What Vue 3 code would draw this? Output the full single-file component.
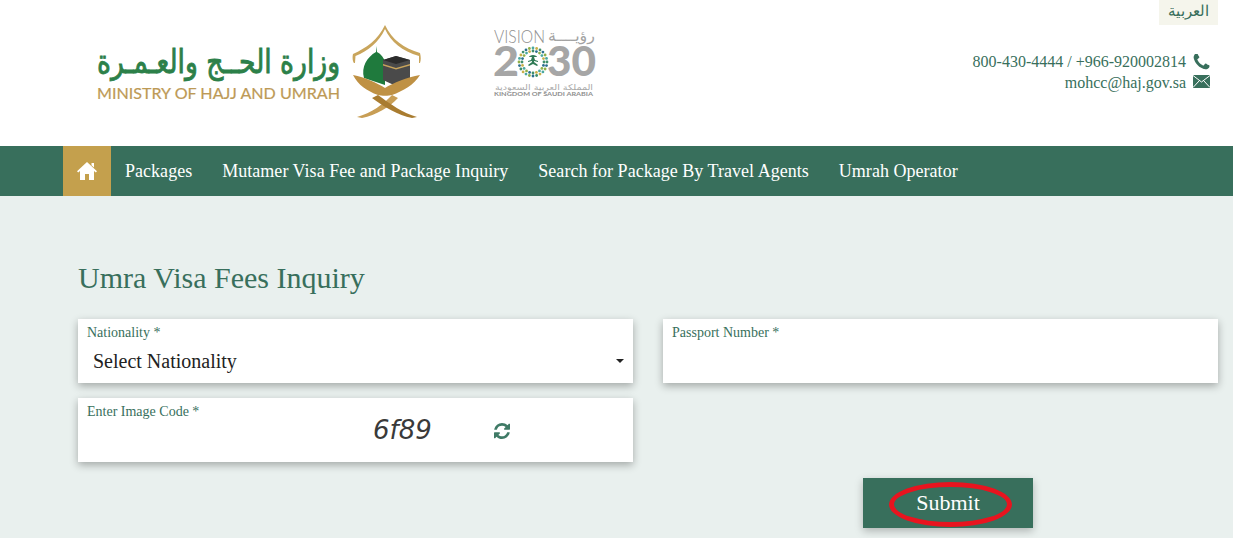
<template>
  <div class="page">
    <header class="top">
      <div class="logos">
        <svg class="moh-logo" viewBox="90 20 335 100" width="335" height="100">
          <text x="340" y="73" text-anchor="end" class="moh-ar" textLength="243" lengthAdjust="spacingAndGlyphs">وزارة الحــج والعـمـرة</text>
          <text x="97" y="99" class="moh-en" textLength="243" lengthAdjust="spacingAndGlyphs">MINISTRY OF HAJJ AND UMRAH</text>
          <path d="M385 25C378 40 366 48 353 54C352 58 353 62 354 63L355 63L355.500 56C368 51 379 42 385 29C391 42 402 51 419 56L419 63L420 63C421 60 421 57 420 53C404 48 392 40 385 25Z" fill="#c9a55c"/>
          <path d="M364 78C361 67 367 57 376 52L376.500 46L377 52C381 54 384 58 385 62L385 85L364 78Z" fill="#1f7a3d"/>
          <path d="M383 60L396 56L410 60L410 79L396 86L383 80Z" fill="#4a4a4a"/>
          <path d="M383 60L396 56L410 60L396 64Z" fill="#2c2c2c"/>
          <path d="M383 64L396 68L410 64L410 65.500L396 69.500L383 65.500Z" fill="#c9a55c"/>
          <path d="M353 75C365 77 377 83 385 88C393 83 407 77 420 75C414 85 403 91 392 95C389 96 381 96 378 95C367 91 358 85 353 75Z" fill="#bf9144"/>
          <path d="M357 117C371 113 384 104 392 95L398 98C390 107 376 115 362 118Z" fill="#c89e55"/>
          <path d="M417 117C403 113 390 104 378 95L372 98C384 107 398 115 412 118Z" fill="#a97c30"/>
        </svg>
        <svg class="vision-logo" viewBox="490 25 110 75" width="110" height="75">
          <text x="494" y="43" class="v-word" textLength="51" lengthAdjust="spacingAndGlyphs">VISION</text>
          <text x="595" y="41" text-anchor="end" class="v-ar" textLength="47" lengthAdjust="spacingAndGlyphs">رؤيــــة</text>
          <text x="493" y="76" class="v-num" textLength="26" lengthAdjust="spacingAndGlyphs">2</text>
          <text x="547" y="76" class="v-num" textLength="49" lengthAdjust="spacingAndGlyphs">30</text>
          <circle v-for="(d, i) in starDots" :key="i" :cx="d.x" :cy="d.y" :r="d.r" :fill="d.c" />
          <path d="M533 55c-2 0-4 1-4 2l3 0-1 3-3 1 0 1 4-1 0 1-4 3 1 1 4-2 4 2 1-1-4-3 0-1 4 1 0-1-3-1-1-3 3 0c0-1-2-2-4-2z" fill="#2f7a55"/>
          <text x="544" y="90" text-anchor="middle" class="v-small-ar" textLength="98" lengthAdjust="spacingAndGlyphs">المملكة العربية السعودية</text>
          <text x="494" y="96" class="v-small" textLength="99" lengthAdjust="spacingAndGlyphs">KINGDOM OF SAUDI ARABIA</text>
        </svg>
      </div>
      <div class="side">
        <a class="lang">العربية</a>
        <div class="contact">
          <div class="contact-row">
            <span>800-430-4444 / +966-920002814</span>
            <svg class="c-icon" viewBox="180 180 1420 1420"><path fill="#386f5c" :d="phonePath" /></svg>
          </div>
          <div class="contact-row">
            <span>mohcc@haj.gov.sa</span>
            <svg class="c-icon mail" viewBox="0 0 17 13">
              <rect width="17" height="13" fill="#386f5c" />
              <path d="M0 .5L8.500 7 17 .5M0 12.500L6.500 5.500M17 12.500L10.500 5.500" fill="none" stroke="#fff" stroke-width="1" />
            </svg>
          </div>
        </div>
      </div>
    </header>

    <nav class="nav">
      <a class="home">
        <svg viewBox="0 0 20 18" width="20" height="18"><path fill="#fff" d="M10 0L20 9.200L18.800 10.500L17 9V18H12V12H8V18H3V9L1.200 10.500L0 9.200ZM14.500 1H17V5.500L14.500 3.200Z" /></svg>
      </a>
      <a v-for="item in navItems" :key="item" class="nav-link">{{ item }}</a>
    </nav>

    <main class="content">
      <h1>Umra Visa Fees Inquiry</h1>
      <div class="form-grid">
        <div class="field">
          <label>Nationality *</label>
          <div class="select">
            <span>Select Nationality</span>
            <i class="caret"></i>
          </div>
        </div>
        <div class="field">
          <label>Passport Number *</label>
        </div>
        <div class="field">
          <label>Enter Image Code *</label>
          <div class="captcha">
            <span class="code">6f89</span>
            <svg class="refresh" viewBox="0 0 1536 1536" width="16" height="16"><path fill="#3f7a66" :d="refreshPath" /></svg>
          </div>
        </div>
      </div>
      <div class="actions">
        <button class="submit">
          Submit
          <span class="ring"></span>
        </button>
      </div>
    </main>
  </div>
</template>

<script setup>
const navItems = [
  'Packages',
  'Mutamer Visa Fee and Package Inquiry',
  'Search for Package By Travel Agents',
  'Umrah Operator'
]

const phonePath = 'M1600 1240q0 27-10 70.5t-21 68.5q-21 50-122 106-94 51-186 51-27 0-53-3.5t-57.5-12.5-47-14.5-55.5-20.5-49-18q-98-35-175-83-127-79-264-216t-216-264q-48-77-83-175-3-9-18-49t-20.5-55.5-14.5-47-12.5-57.5-3.5-53q0-92 51-186 56-101 106-122 25-11 68.5-21t70.5-10q14 0 21 3 18 6 53 76 11 19 30 54t35 63.5 31 53.5q3 4 17.5 25t21.5 35.5 7 28.5q0 20-28.5 50t-62 55-62 53-28.5 46q0 9 5 22.5t8.5 20.5 14 24 11.5 19q76 137 174 235t235 174q2 1 19 11.5t24 14 20.5 8.5 22.5 5q18 0 46-28.5t53-62 55-62 50-28.5q14 0 28.5 7t35.5 21.5 25 17.5q25 15 53.5 31t63.5 35 54 30q70 35 76 53 3 7 3 21z'
const refreshPath = 'M1511 928q0 5-1 7-64 268-268 434.5t-478 166.5q-146 0-282.5-55t-243.5-157l-129 129q-19 19-45 19t-45-19-19-45v-448q0-26 19-45t45-19h448q26 0 45 19t19 45-19 45l-137 137q71 66 161 102t187 36q134 0 250-65t186-179q11-17 53-117 8-23 30-23h192q13 0 22.5 9.5t9.5 22.5zm25-800v448q0 26-19 45t-45 19h-448q-26 0-45-19t-19-45 19-45l138-138q-148-137-349-137-134 0-250 65t-186 179q-11 17-53 117-8 23-30 23h-199q-13 0-22.5-9.5t-9.5-22.5v-7q65-268 270-434.5t480-166.5q146 0 284 55.5t245 156.5l130-129q19-19 45-19t45 19 19 45z'

// the vision 2030 star, two rings of coloured dots round the emblem
const dotColors = ['#3f8f6b', '#2b6f8f', '#8fb04a', '#4aa8a0', '#c8b04a']
const starDots = []
for (const [radius, count, size] of [[14, 24, 1.4], [11, 20, 1.4]]) {
  for (let i = 0; i < count; i++) {
    const a = (i / count) * Math.PI * 2
    starDots.push({
      x: +(533 + Math.cos(a) * radius).toFixed(2),
      y: +(62 + Math.sin(a) * radius).toFixed(2),
      r: size,
      c: dotColors[i % dotColors.length]
    })
  }
}
</script>

<style scoped>
.page {
  height: 538px;
  overflow: hidden;
  background: #e9f0ee;
  font-family: "Liberation Serif", "DejaVu Serif", serif;
}
.top {
  height: 146px;
  background: #fff;
  display: flex;
  justify-content: space-between;
}
.logos {
  display: flex;
  align-items: flex-start;
  padding: 20px 0 0 90px;
}
.moh-logo { display: block; }
.vision-logo { display: block; margin: 5px 0 0 65px; }
.moh-ar { font: 400 33px "DejaVu Sans", sans-serif; fill: #2c8049; stroke: #2c8049; stroke-width: 0.9px; }
.moh-en { font: 400 16px Lato, "Liberation Sans", sans-serif; fill: #bd9a56; stroke: #bd9a56; stroke-width: 0.2px; }
.v-word { font: 300 18px Lato, sans-serif; fill: #8f8f8f; }
.v-ar { font: 400 15px "DejaVu Sans", sans-serif; fill: #a3a3a3; }
.v-num { font: 900 41px Lato, "Liberation Sans", sans-serif; fill: #a6a6a6; }
.v-small-ar { font: 400 8px "DejaVu Sans", sans-serif; fill: #a8a8a8; }
.v-small { font: 700 6px Lato, sans-serif; fill: #8f8f8f; }
.side {
  display: flex;
  flex-direction: column;
  align-items: flex-end;
  padding-right: 15px;
}
.lang {
  width: 59px;
  height: 25px;
  background: #f5f5ec;
  color: #386f5c;
  font-size: 15px;
  line-height: 23px;
  text-align: center;
}
.contact {
  margin: 26px 8px 0 0;
  color: #386f5c;
  font-size: 16px;
  line-height: 21px;
}
.contact-row {
  display: flex;
  justify-content: flex-end;
  align-items: center;
  gap: 7px;
}
.c-icon { width: 17px; height: 16px; flex: none; }
.c-icon.mail { height: 13px; margin-top: -3px; }
.nav {
  height: 50px;
  background: #386f5c;
  display: flex;
  align-items: center;
  padding-left: 63px;
}
.home {
  width: 48px;
  height: 50px;
  background: #c4a04d;
  display: flex;
  align-items: center;
  justify-content: center;
  margin-right: 14px;
}
.nav-link {
  color: #fff;
  font-size: 18px;
  letter-spacing: 0.03px;
  margin-right: 30px;
  white-space: nowrap;
}
.content {
  padding: 0 15px 0 78px;
}
h1 {
  margin: 0;
  padding-top: 65px;
  height: 123px;
  box-sizing: border-box;
  font-size: 30px;
  font-weight: 400;
  line-height: 34px;
  color: #386f5c;
}
.form-grid {
  display: grid;
  grid-template-columns: 555px 555px;
  grid-auto-rows: 64px;
  column-gap: 30px;
  row-gap: 15px;
}
.field {
  position: relative;
  background: #fff;
  box-shadow: 0 3px 8px rgba(0, 0, 0, 0.3);
  padding: 6px 9px 0;
}
label {
  display: block;
  color: #386f5c;
  font-size: 14px;
  line-height: 16px;
}
.select {
  display: flex;
  align-items: center;
  justify-content: space-between;
  padding: 8px 0 0 6px;
  font-size: 20px;
  line-height: 24px;
  color: #222;
}
.caret {
  width: 0;
  height: 0;
  border-left: 4px solid transparent;
  border-right: 4px solid transparent;
  border-top: 4px solid #222;
}
.captcha {
  display: flex;
  align-items: center;
  padding-left: 286px;
  margin-top: -5px;
  height: 30px;
}
.code {
  font: italic 400 26px "DejaVu Sans", sans-serif;
  color: #3a3a3a;
  width: 121px;
}
.refresh { flex: none; margin-top: 1px; }
.actions {
  margin-top: 16px;
  padding-left: 785px;
}
.submit {
  position: relative;
  display: block;
  width: 170px;
  height: 50px;
  border: 0;
  padding: 0;
  background: #386f5c;
  color: #fff;
  font-family: inherit;
  font-size: 22px;
  box-shadow: 0 3px 8px rgba(0, 0, 0, 0.25);
}
.ring {
  position: absolute;
  left: 26px;
  top: 4px;
  width: 123px;
  height: 45px;
  box-sizing: border-box;
  border: 5px solid #e8141f;
  border-radius: 50%;
}
</style>
